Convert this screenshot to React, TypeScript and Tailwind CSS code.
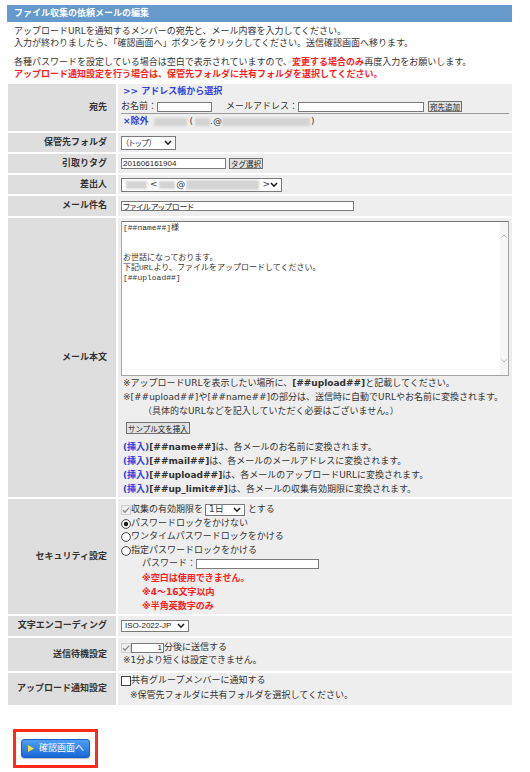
import type { ReactNode } from 'react';

// grey placeholder for masked personal data (names, addresses)
function Masked({ w, className = '' }: { w: number; className?: string }) {
  return (
    <span
      className={`inline-block h-[8px] bg-[#d3d3d3] blur-[1px] ${className}`}
      style={{ width: w }}
    />
  );
}

function Chevron() {
  return (
    <svg width="8" height="6" viewBox="0 0 8 6" className="shrink-0">
      <polyline points="1,1 4,4.2 7,1" fill="none" stroke="#1a1a1a" strokeWidth="1.5" />
    </svg>
  );
}

function Select({ width, height, children }: { width: number; height: number; children: ReactNode }) {
  return (
    <div
      className="flex items-center justify-between bg-white border border-[#7a7a7a] pl-[3px] pr-[3px] overflow-hidden"
      style={{ width, height }}
    >
      <div className="flex items-center min-w-0">{children}</div>
      <Chevron />
    </div>
  );
}

function CheckBox({ checked = false, disabled = false }: { checked?: boolean; disabled?: boolean }) {
  return (
    <svg width="10" height="10" viewBox="0 0 10 10" className="shrink-0">
      <rect
        x="0.5"
        y="0.5"
        width="9"
        height="9"
        fill={disabled ? '#f0f0f0' : '#fff'}
        stroke={disabled ? '#cfcfcf' : '#444'}
      />
      {checked && (
        <path d="M2 5.2 L4 7.2 L8.2 2.6" fill="none" stroke={disabled ? '#8c8c8c' : '#222'} strokeWidth="1.3" />
      )}
    </svg>
  );
}

function Radio({ checked = false }: { checked?: boolean }) {
  return (
    <svg width="10" height="10" viewBox="0 0 10 10" className="shrink-0">
      <circle cx="5" cy="5" r="4.4" fill="#fff" stroke="#333" strokeWidth="0.9" />
      {checked && <circle cx="5" cy="5" r="2.2" fill="#1a1a1a" />}
    </svg>
  );
}

function SmallButton({ children, className = '' }: { children: ReactNode; className?: string }) {
  return (
    <button
      className={`h-[11px] px-[1px] bg-[#e1e1e1] border border-[#707070] text-[7.5px] leading-[9px] text-[#222] whitespace-nowrap font-['Noto_Sans_CJK_JP',sans-serif] ${className}`}
    >
      {children}
    </button>
  );
}

function Label({ children }: { children: ReactNode }) {
  return (
    <div className="bg-[#dedede] flex items-center justify-end pr-[9px] font-bold whitespace-nowrap">{children}</div>
  );
}

const insertRows = [
  { tag: '[##name##]', text: 'は、各メールのお名前に変換されます。' },
  { tag: '[##mail##]', text: 'は、各メールのメールアドレスに変換されます。' },
  { tag: '[##upload##]', text: 'は、各メールのアップロードURLに変換されます。' },
  { tag: '[##up_limit##]', text: 'は、各メールの収集有効期限に変換されます。' },
];

export default function App() {
  return (
    <div className="w-[530px] min-h-[772px] bg-white pt-[5px] text-[9px] text-[#333] font-['DejaVu_Sans','Noto_Sans_CJK_JP',sans-serif]">
      <div className="ml-[7px] w-[505px] h-[17px] bg-[#6699cc] text-white font-bold pl-[7px] flex items-center">
        ファイル収集の依頼メールの編集
      </div>

      {/* guidance text */}
      <div className="pl-[14px] mt-[3px] leading-[12px]">
        <p>アップロードURLを通知するメンバーの宛先と、メール内容を入力してください。</p>
        <p>入力が終わりましたら、「確認画面へ」ボタンをクリックしてください。送信確認画面へ移ります。</p>
        <p className="mt-[7px]">
          各種パスワードを設定している場合は空白で表示されていますので、
          <span className="text-[#ff2020] font-bold">変更する場合のみ</span>
          再度入力をお願いします。
        </p>
        <p className="text-[#ff2020] font-bold">
          アップロード通知設定を行う場合は、保管先フォルダに共有フォルダを選択してください。
        </p>
      </div>

      <div className="ml-[8px] mt-[4px] grid grid-cols-[108px_394px] gap-[2px]">
        {/* 宛先 */}
        <Label>宛先</Label>
        <div className="bg-[#eeeeee] px-[3px] pt-[2px] pb-[2px]">
          <div className="h-[12px] flex items-center pl-[2px] text-[#3340dd] font-bold">&gt;&gt; アドレス帳から選択</div>
          <div className="h-[16px] pt-[2px] border-b border-[#9a9a9a] flex items-center">
            <span>お名前：</span>
            <input readOnly className="w-[55px] h-[10px] bg-white border border-[#7a7a7a]" />
            <span className="ml-[14px]">メールアドレス：</span>
            <input readOnly className="w-[126px] h-[10px] bg-white border border-[#7a7a7a]" />
            <SmallButton className="ml-[4px]">宛先追加</SmallButton>
          </div>
          <div className="h-[15px] flex items-center pl-[2px]">
            <span className="text-[#3340dd] font-bold">×除外</span>
            <Masked w={33} className="ml-[5px]" />
            <span className="ml-[3px]">(</span>
            <Masked w={15} className="ml-[2px]" />
            <span>.@</span>
            <Masked w={88} />
            <span className="ml-[1px]">)</span>
          </div>
        </div>

        {/* 保管先フォルダ */}
        <Label>保管先フォルダ</Label>
        <div className="bg-[#eeeeee] h-[19px] flex items-center pl-[3px]">
          <Select width={55} height={14}>
            <span className="text-[8px] font-['Noto_Sans_CJK_JP',sans-serif] [font-feature-settings:'palt']">（トップ）</span>
          </Select>
        </div>

        {/* 引取りタグ */}
        <Label>引取りタグ</Label>
        <div className="bg-[#eeeeee] h-[19px] flex items-center pl-[3px]">
          <input
            readOnly
            value="201606161904"
            className="w-[105px] h-[11px] bg-white border border-[#7a7a7a] px-[1px] text-[8px] font-['Liberation_Sans',sans-serif] text-[#222]"
          />
          <SmallButton className="ml-[3px]">タグ選択</SmallButton>
        </div>

        {/* 差出人 */}
        <Label>差出人</Label>
        <div className="bg-[#eeeeee] h-[19px] flex items-center pl-[3px]">
          <Select width={161} height={14}>
            <Masked w={23} className="ml-[1px]" />
            <span className="ml-[3px]">&lt;</span>
            <Masked w={18} className="ml-[1px]" />
            <span className="ml-[1px]">@</span>
            <Masked w={80} className="ml-[1px] h-[10px]" />
            <span className="ml-[3px]">&gt;</span>
          </Select>
        </div>

        {/* メール件名 */}
        <Label>メール件名</Label>
        <div className="bg-[#eeeeee] h-[20px] flex items-center pl-[3px]">
          <input
            readOnly
            value="ファイルアップロード"
            className="w-[233px] h-[10px] bg-white border border-[#7a7a7a] px-[1px] text-[8px] leading-[8px] text-[#222] font-['Noto_Sans_CJK_JP',sans-serif] [font-feature-settings:'palt']"
          />
        </div>

        {/* メール本文 */}
        <Label>メール本文</Label>
        <div className="bg-[#eeeeee] px-[3px] pt-[3px] pb-[1px]">
          <div className="h-[155px] bg-white border border-[#a5a5a5] border-t-[#777] flex">
            <div className="flex-1 pl-[1px] pt-[1px] whitespace-pre text-[8px] leading-[10px] text-[#333] font-['Liberation_Mono','Noto_Sans_CJK_JP',monospace]">
              {'[##name##]様\n\n\nお世話になっております。\n下記URLより、ファイルをアップロードしてください。\n[##upload##]'}
            </div>
            {/* scrollbar */}
            <div className="w-[8px] bg-[#f6f6f6] flex flex-col items-center justify-between pt-[12px] pb-[12px]">
              <svg width="6" height="4" viewBox="0 0 6 4">
                <polyline points="0.5,3.5 3,1 5.5,3.5" fill="none" stroke="#b5b5b5" strokeWidth="1" />
              </svg>
              <svg width="6" height="4" viewBox="0 0 6 4">
                <polyline points="0.5,0.5 3,3 5.5,0.5" fill="none" stroke="#b5b5b5" strokeWidth="1" />
              </svg>
            </div>
          </div>
          <div className="pl-[2px] leading-[14px]">
            <p>
              ※アップロードURLを表示したい場所に、<span className="font-bold">[##upload##]</span>と記載してください。
            </p>
            <p>※[##upload##]や[##name##]の部分は、送信時に自動でURLやお名前に変換されます。</p>
            <p className="pl-[20px]">（具体的なURLなどを記入していただく必要はございません。）</p>
          </div>
          <div className="mt-[4px] pl-[5px] h-[12px] flex items-center">
            <SmallButton className="h-[12px]">サンプル文を挿入</SmallButton>
          </div>
          <div className="mt-[6px] pl-[2px] leading-[14px]">
            {insertRows.map(r => (
              <p key={r.tag}>
                <span className="text-[#3340dd] font-bold">(挿入)</span>
                <span className="font-bold">{r.tag}</span>
                {r.text}
              </p>
            ))}
          </div>
        </div>

        {/* セキュリティ設定 */}
        <Label>セキュリティ設定</Label>
        <div className="bg-[#eeeeee] pl-[3px] pt-[4px] pb-[1px]">
          <div className="h-[14px] flex items-center">
            <CheckBox checked disabled />
            <span>収集の有効期限を</span>
            <div className="ml-[2px] mr-[3px]">
              <Select width={40} height={12}>
                <span>1日</span>
              </Select>
            </div>
            <span>とする</span>
          </div>
          <div className="h-[13px] flex items-center">
            <Radio checked />
            <span>パスワードロックをかけない</span>
          </div>
          <div className="h-[14px] flex items-center">
            <Radio />
            <span>ワンタイムパスワードロックをかける</span>
          </div>
          <div className="h-[13px] flex items-center">
            <Radio />
            <span>指定パスワードロックをかける</span>
          </div>
          <div className="h-[14px] flex items-center pl-[21px]">
            <span>パスワード：</span>
            <input readOnly className="w-[123px] h-[10px] bg-white border border-[#7a7a7a]" />
          </div>
          <div className="pl-[21px] leading-[14px] text-[#ff2020] font-bold">
            <p>※空白は使用できません。</p>
            <p>※4～16文字以内</p>
            <p>※半角英数字のみ</p>
          </div>
        </div>

        {/* 文字エンコーディング */}
        <Label>文字エンコーディング</Label>
        <div className="bg-[#eeeeee] h-[20px] flex items-center pl-[3px]">
          <Select width={68} height={12}>
            <span className="text-[8px] font-['Liberation_Sans',sans-serif] text-[#222]">ISO-2022-JP</span>
          </Select>
        </div>

        {/* 送信待機設定 */}
        <Label>送信待機設定</Label>
        <div className="bg-[#eeeeee] pl-[3px] pt-[3px] pb-[3px]">
          <div className="h-[13px] flex items-center">
            <CheckBox checked disabled />
            <input
              readOnly
              value="1"
              className="w-[33px] h-[10px] bg-white border border-[#7a7a7a] text-right pr-[1px] text-[8px] leading-[8px] font-['Liberation_Sans',sans-serif] text-[#222]"
            />
            <span>分後に送信する</span>
          </div>
          <div className="h-[14px] flex items-center pl-[2px]">※1分より短くは設定できません。</div>
        </div>

        {/* アップロード通知設定 */}
        <Label>アップロード通知設定</Label>
        <div className="bg-[#eeeeee] pl-[3px] pt-[1px] pb-[2px]">
          <div className="h-[14px] flex items-center">
            <CheckBox />
            <span>共有グループメンバーに通知する</span>
          </div>
          <div className="h-[15px] flex items-center pl-[9px]">※保管先フォルダに共有フォルダを選択してください。</div>
        </div>
      </div>

      {/* submit */}
      <div className="mt-[24px] ml-[13px] w-[85px] h-[39px] border-[3px] border-[#ff2b1a] flex items-center justify-center">
        <button className="w-[69px] h-[19px] rounded-[3px] bg-linear-to-b from-[#4d9ff6] to-[#1668d8] border border-[#1c5fc2] text-white flex items-center pl-[6px] gap-[5px] text-[9px] shadow-[0_1px_1px_rgba(0,0,0,0.25)]">
          <svg width="6" height="7" viewBox="0 0 6 7">
            <polygon points="0,0 6,3.5 0,7" fill="#f6e23a" />
          </svg>
          確認画面へ
        </button>
      </div>
    </div>
  );
}
